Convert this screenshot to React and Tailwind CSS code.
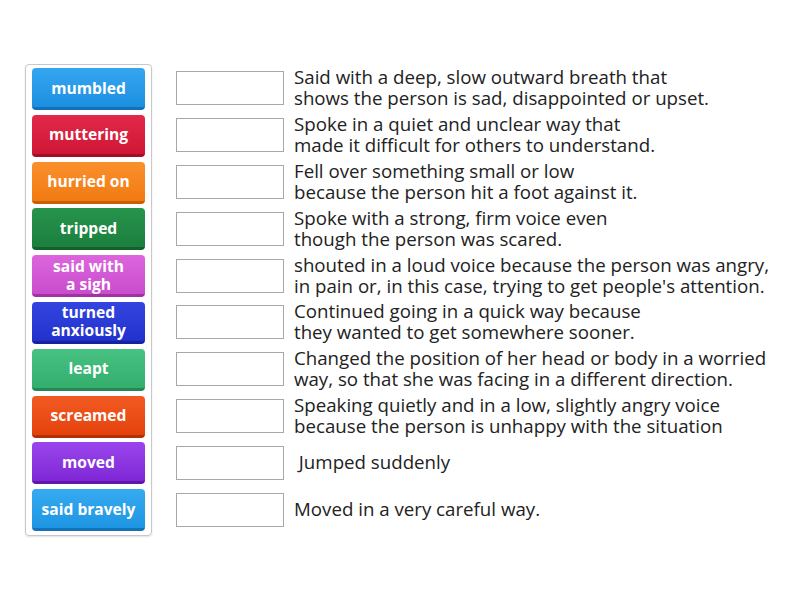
import React from "react";

const items = [
  { label: "mumbled", cls: "bg-gradient-to-b from-[#35a6f0] to-[#1b8fe0] border-b-[#1470b8]" },
  { label: "muttering", cls: "bg-gradient-to-b from-[#e3284a] to-[#cf1634] border-b-[#a10f26]" },
  { label: "hurried on", cls: "bg-gradient-to-b from-[#fa902c] to-[#f27a10] border-b-[#c65f06]" },
  { label: "tripped", cls: "bg-gradient-to-b from-[#27944d] to-[#1b7f3e] border-b-[#12602d]" },
  { label: "said with\na sigh", cls: "bg-gradient-to-b from-[#dc66de] to-[#c94ccc] border-b-[#a0339f]" },
  { label: "turned\nanxiously", cls: "bg-gradient-to-b from-[#3344e0] to-[#2131cc] border-b-[#16239e]" },
  { label: "leapt", cls: "bg-gradient-to-b from-[#48c282] to-[#33ae6d] border-b-[#258854]" },
  { label: "screamed", cls: "bg-gradient-to-b from-[#f25a22] to-[#e5420b] border-b-[#b23005]" },
  { label: "moved", cls: "bg-gradient-to-b from-[#9a45ec] to-[#7f26d6] border-b-[#5f17a8]" },
  { label: "said bravely", cls: "bg-gradient-to-b from-[#35aaf0] to-[#1e96e3] border-b-[#1473b8]" },
];

const defs = [
  "Said with a deep, slow outward breath that\nshows the person is sad, disappointed or upset.",
  "Spoke in a quiet and unclear way that\nmade it difficult for others to understand.",
  "Fell over something small or low\nbecause the person hit a foot against it.",
  "Spoke with a strong, firm voice even\nthough the person was scared.",
  "shouted in a loud voice because the person was angry,\nin pain or, in this case, trying to get people's attention.",
  "Continued going in a quick way because\nthey wanted to get somewhere sooner.",
  "Changed the position of her head or body in a worried\nway, so that she was facing in a different direction.",
  "Speaking quietly and in a low, slightly angry voice\nbecause the person is unhappy with the situation",
  " Jumped suddenly",
  "Moved in a very careful way.",
];

export default function App() {
  return (
    <div
      className="w-[800px] h-[600px] bg-white flex items-start"
      style={{ fontFamily: '"Open Sans", "Liberation Sans", sans-serif' }}
    >
      <div className="ml-[25px] mt-[64px] w-[127px] border border-[#c8c8c8] rounded-[4px] shadow-[0_1px_2px_rgba(0,0,0,0.12)] px-[6px] pt-[3px] pb-[4px] flex flex-col gap-[4.8px]">
        {items.map((it, i) => (
          <div
            key={i}
            className={`h-[42px] rounded-[4px] border-b-[3px] flex items-center justify-center text-center text-white font-bold text-[15.6px] leading-[18px] whitespace-pre-line ${it.cls}`}
          >
            {it.label}
          </div>
        ))}
      </div>
      <div className="ml-[24px] mt-[65px] flex flex-col">
        {defs.map((d, i) => (
          <div key={i} className="h-[46.8px] flex items-center">
            <div className="w-[108px] h-[34px] border border-[#a8a8a8] bg-white shrink-0" />
            <div className="ml-[10px] -mt-[2px] text-[18.7px] leading-[21px] text-[#222] whitespace-pre">
              {d}
            </div>
          </div>
        ))}
      </div>
    </div>
  );
}
